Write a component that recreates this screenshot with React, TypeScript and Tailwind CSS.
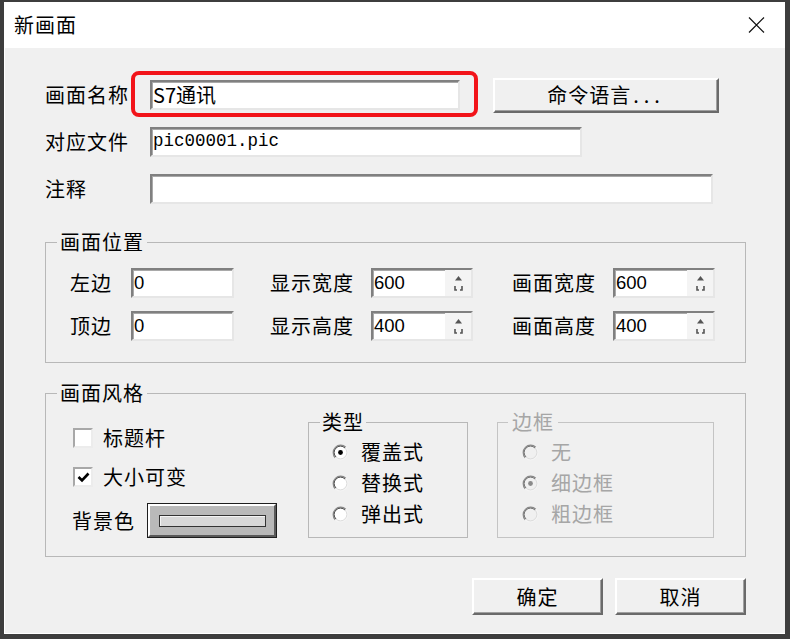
import React from "react";

const CJK = "font-['Noto_Sans_CJK_SC','Noto_Sans',sans-serif]";

function Sunken({ className = "", children }: { className?: string; children?: React.ReactNode }) {
  return (
    <div
      className={
        "bg-white border-2 border-t-[#808080] border-l-[#808080] border-b-[#e6e6e6] border-r-[#e6e6e6] shadow-[inset_1px_1px_0_#a9a9a9] flex items-center " +
        className
      }
    >
      {children}
    </div>
  );
}

function Raised({ className = "", children }: { className?: string; children?: React.ReactNode }) {
  return (
    <div
      className={
        "bg-[#f0f0f0] border-2 border-t-white border-l-white border-b-[#6a6a6a] border-r-[#6a6a6a] shadow-[inset_-1px_-1px_0_#a0a0a0] flex items-center justify-center " +
        className
      }
    >
      {children}
    </div>
  );
}

function Label({ className = "", children }: { className?: string; children: React.ReactNode }) {
  return <span className={CJK + " text-[20px] leading-none tracking-[1px] text-black shrink-0 " + className}>{children}</span>;
}

function Spin({ value }: { value: string }) {
  return (
    <Sunken className="w-[102px] h-[30px]">
      <span className="flex-1 pl-[1px] font-['Liberation_Sans',Arial,sans-serif] text-[18.5px] leading-none text-black">{value}</span>
      <div className="w-[26px] h-full bg-[#f4f4f4] flex flex-col items-center justify-center gap-[5px]">
        <svg width="9" height="5" viewBox="0 0 9 5">
          <path d="M4.5 0 L8 4.5 L1 4.5 Z" fill="#555" />
        </svg>
        <svg width="9" height="5" viewBox="0 0 9 5">
          <path d="M1 0 L1 4 L3 4" stroke="#555" strokeWidth="1.6" fill="none" />
          <path d="M8 0 L8 4 L6 4" stroke="#555" strokeWidth="1.6" fill="none" />
        </svg>
      </div>
    </Sunken>
  );
}

function Radio({ checked = false, disabled = false, label }: { checked?: boolean; disabled?: boolean; label: string }) {
  return (
    <div className="flex items-center h-[24px]">
      <svg width="17" height="17" viewBox="0 0 17 17" className="shrink-0">
        <circle cx="8.5" cy="8.5" r="7" fill={disabled ? "#f0f0f0" : "#ffffff"} />
        <path d="M3.2 13.8 A7.5 7.5 0 0 1 13.8 3.2" stroke="#8a8a8a" strokeWidth="1.2" fill="none" />
        <path d="M13.8 3.2 A7.5 7.5 0 0 1 3.2 13.8" stroke="#f4f4f4" strokeWidth="1.2" fill="none" />
        <path d="M4 13 A6.3 6.3 0 0 1 13 4" stroke={disabled ? "#707070" : "#4a4a4a"} strokeWidth="1" fill="none" />
        <path d="M13 4 A6.3 6.3 0 0 1 4 13" stroke="#dcdcdc" strokeWidth="1" fill="none" />
        {checked && <circle cx="8.5" cy="8.5" r="2.4" fill={disabled ? "#8a8a8a" : "#000"} />}
      </svg>
      <span className={CJK + " ml-[12px] text-[20px] leading-none tracking-[1px] " + (disabled ? "text-[#a6a6a6]" : "text-black")}>
        {label}
      </span>
    </div>
  );
}

function Check({ checked = false, label }: { checked?: boolean; label: string }) {
  return (
    <div className="flex items-center h-[24px]">
      <div className="w-[20px] h-[20px] ml-[1px] bg-white border-2 border-t-[#a8a8a8] border-l-[#a8a8a8] border-b-[#ececec] border-r-[#ececec] flex items-center justify-center">
        {checked && (
          <svg width="13" height="11" viewBox="0 0 13 11">
            <path d="M1.5 5 L5 8.5 L11.5 1.5" stroke="#000" strokeWidth="2.6" fill="none" />
          </svg>
        )}
      </div>
      <span className={CJK + " ml-[10px] text-[20px] leading-none tracking-[1px] text-black"}>{label}</span>
    </div>
  );
}

export default function App() {
  return (
    <div className="w-[790px] h-[639px] bg-[#3d3d3d] pl-[4px] pr-[5px] pt-[2px] pb-[5px] flex">
      <div className="flex-1 flex flex-col">
        {/* Title bar */}
        <div className="h-[46px] bg-white flex items-center justify-between pl-[10px] pr-[20px] shrink-0">
          <span className={CJK + " text-[20px] leading-none tracking-[1px] text-black"}>新画面</span>
          <svg width="17" height="16" viewBox="0 0 17 16">
            <path d="M1 0.5 L16 15.5 M16 0.5 L1 15.5" stroke="#111" strokeWidth="1.2" />
          </svg>
        </div>
        {/* Body */}
        <div className="flex-1 bg-[#f0f0f0] border-l border-b border-white pl-[40px] flex flex-col">
          {/* Row 1 */}
          <div className="relative mt-[29px] h-[36px] flex items-center">
            <Label className="w-[105px]">画面名称</Label>
            <Sunken className="w-[310px] h-[30px] pl-[1px]">
              <span className={CJK + " text-[20px] leading-none text-black"}>S7通讯</span>
            </Sunken>
            <Raised className="ml-[33px] w-[226px] h-[35px]">
              <span className={CJK + " text-[20px] leading-none tracking-[1px] text-black"}>
                命令语言<span className="tracking-[5px] ml-[2px]">...</span>
              </span>
            </Raised>
            <div className="absolute left-[86px] top-[-6px] w-[347px] h-[46px] border-[4px] border-[#f2141a] rounded-[8px] pointer-events-none" />
          </div>
          {/* Row 2 */}
          <div className="mt-[14px] h-[30px] flex items-center">
            <Label className="w-[105px]">对应文件</Label>
            <Sunken className="w-[432px] h-[30px] pl-[1px]">
              <span className="font-['Liberation_Mono','Courier_New',monospace] text-[17.5px] leading-none text-black">pic00001.pic</span>
            </Sunken>
          </div>
          {/* Row 3 */}
          <div className="mt-[17px] h-[30px] flex items-center">
            <Label className="w-[105px]">注释</Label>
            <Sunken className="w-[563px] h-[30px]" />
          </div>

          {/* Group 1 */}
          <fieldset className="mt-[26px] w-[701px] border border-[#b8b8b8] pb-[21px]">
            <legend className={CJK + " ml-[11px] px-[3px] text-[20px] leading-[24px] tracking-[1px] text-black"}>画面位置</legend>
            <div className="mt-[14px] h-[30px] flex items-center pl-[24px]">
              <Label className="w-[61px]">左边</Label>
              <Sunken className="w-[103px] h-[30px] pl-[1px]">
                <span className="font-['Liberation_Sans',Arial,sans-serif] text-[18.5px] leading-none text-black">0</span>
              </Sunken>
              <Label className="ml-[36px] w-[101px]">显示宽度</Label>
              <Spin value="600" />
              <Label className="ml-[39px] w-[101px]">画面宽度</Label>
              <Spin value="600" />
            </div>
            <div className="mt-[13px] h-[30px] flex items-center pl-[24px]">
              <Label className="w-[61px]">顶边</Label>
              <Sunken className="w-[103px] h-[30px] pl-[1px]">
                <span className="font-['Liberation_Sans',Arial,sans-serif] text-[18.5px] leading-none text-black">0</span>
              </Sunken>
              <Label className="ml-[36px] w-[101px]">显示高度</Label>
              <Spin value="400" />
              <Label className="ml-[39px] w-[101px]">画面高度</Label>
              <Spin value="400" />
            </div>
          </fieldset>

          {/* Group 2 */}
          <fieldset className="mt-[18px] w-[701px] border border-[#b8b8b8] pb-[18px]">
            <legend className={CJK + " ml-[11px] px-[3px] text-[20px] leading-[24px] tracking-[1px] text-black"}>画面风格</legend>
            <div className="flex items-start pl-[26px]">
              <div className="w-[236px] mt-[21px] flex flex-col">
                <Check label="标题杆" />
                <div className="mt-[15px]">
                  <Check checked label="大小可变" />
                </div>
                <div className="mt-[14px] h-[35px] flex items-center">
                  <Label className="w-[75px]">背景色</Label>
                  <div className="w-[130px] h-[35px] border border-[#1e1e1e] flex">
                    <div className="flex-1 bg-[#b9b9b9] border-2 border-t-white border-l-white border-b-[#5a5a5a] border-r-[#5a5a5a] flex items-center justify-center">
                      <div className="w-[107px] h-[12px] border border-[#333] bg-[#d8d8d8] shadow-[inset_1px_1px_0_#f4f4f4]" />
                    </div>
                  </div>
                </div>
              </div>

              <fieldset className="mt-[5px] w-[160px] h-[128px] border border-[#b8b8b8] pl-[23px]">
                <legend className={CJK + " ml-[-12px] px-[2px] text-[20px] leading-[24px] tracking-[1px] text-black"}>类型</legend>
                <div className="mt-[6px] flex flex-col gap-[7px]">
                  <Radio checked label="覆盖式" />
                  <Radio label="替换式" />
                  <Radio label="弹出式" />
                </div>
              </fieldset>

              <fieldset className="mt-[5px] ml-[29px] w-[217px] h-[128px] border border-[#c4c4c4] pl-[24px]">
                <legend className={CJK + " ml-[-14px] px-[4px] text-[20px] leading-[24px] tracking-[1px] text-[#a6a6a6]"}>边框</legend>
                <div className="mt-[6px] flex flex-col gap-[7px]">
                  <Radio disabled label="无" />
                  <Radio disabled checked label="细边框" />
                  <Radio disabled label="粗边框" />
                </div>
              </fieldset>
            </div>
          </fieldset>

          {/* Buttons */}
          <div className="mt-[21px] w-[701px] flex justify-end gap-[12px]">
            <Raised className="w-[131px] h-[37px]">
              <span className={CJK + " text-[20px] leading-none tracking-[1px] text-black"}>确定</span>
            </Raised>
            <Raised className="w-[131px] h-[37px]">
              <span className={CJK + " text-[20px] leading-none tracking-[1px] text-black"}>取消</span>
            </Raised>
          </div>
        </div>
      </div>
    </div>
  );
}
